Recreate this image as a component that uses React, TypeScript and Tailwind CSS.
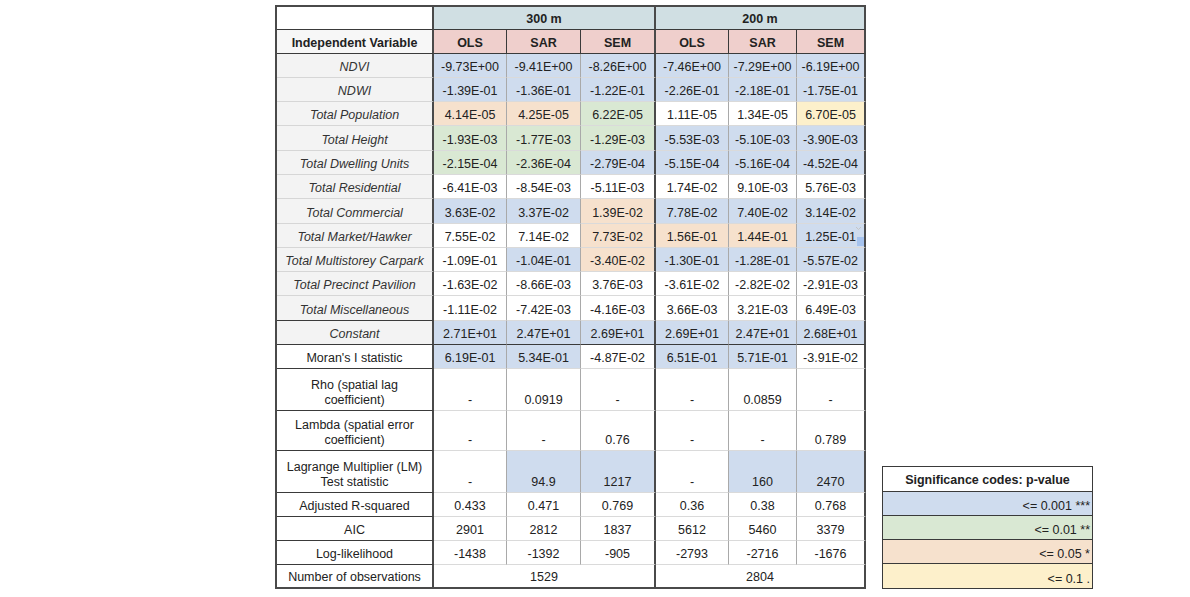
import type { ReactNode } from 'react';

type Fill = 'B' | 'G' | 'O' | 'Y' | 'W';

const fillClass: Record<Fill, string> = {
  B: 'bg-[#cfdcee]',
  G: 'bg-[#d9e8d3]',
  O: 'bg-[#f6e1cd]',
  Y: 'bg-[#fdf0cb]',
  W: 'bg-white',
};

interface CoefRow {
  label: string;
  vals: string[];
  fills: string;
}

const coefRows: CoefRow[] = [
  { label: 'NDVI', vals: ['-9.73E+00', '-9.41E+00', '-8.26E+00', '-7.46E+00', '-7.29E+00', '-6.19E+00'], fills: 'BBBBBB' },
  { label: 'NDWI', vals: ['-1.39E-01', '-1.36E-01', '-1.22E-01', '-2.26E-01', '-2.18E-01', '-1.75E-01'], fills: 'BBBBBB' },
  { label: 'Total Population', vals: ['4.14E-05', '4.25E-05', '6.22E-05', '1.11E-05', '1.34E-05', '6.70E-05'], fills: 'OOGWWY' },
  { label: 'Total Height', vals: ['-1.93E-03', '-1.77E-03', '-1.29E-03', '-5.53E-03', '-5.10E-03', '-3.90E-03'], fills: 'GGGBBB' },
  { label: 'Total Dwelling Units', vals: ['-2.15E-04', '-2.36E-04', '-2.79E-04', '-5.15E-04', '-5.16E-04', '-4.52E-04'], fills: 'GGBBBB' },
  { label: 'Total Residential', vals: ['-6.41E-03', '-8.54E-03', '-5.11E-03', '1.74E-02', '9.10E-03', '5.76E-03'], fills: 'WWWWWW' },
  { label: 'Total Commercial', vals: ['3.63E-02', '3.37E-02', '1.39E-02', '7.78E-02', '7.40E-02', '3.14E-02'], fills: 'BBOBBB' },
  { label: 'Total Market/Hawker', vals: ['7.55E-02', '7.14E-02', '7.73E-02', '1.56E-01', '1.44E-01', '1.25E-01'], fills: 'WWOOOB' },
  { label: 'Total Multistorey Carpark', vals: ['-1.09E-01', '-1.04E-01', '-3.40E-02', '-1.30E-01', '-1.28E-01', '-5.57E-02'], fills: 'WBOBBB' },
  { label: 'Total Precinct Pavilion', vals: ['-1.63E-02', '-8.66E-03', '3.76E-03', '-3.61E-02', '-2.82E-02', '-2.91E-03'], fills: 'WWWWWW' },
  { label: 'Total Miscellaneous', vals: ['-1.11E-02', '-7.42E-03', '-4.16E-03', '3.66E-03', '3.21E-03', '6.49E-03'], fills: 'WWWWWW' },
  { label: 'Constant', vals: ['2.71E+01', '2.47E+01', '2.69E+01', '2.69E+01', '2.47E+01', '2.68E+01'], fills: 'BBBBBB' },
];

interface StatRow {
  label: ReactNode;
  vals: string[];
  fills: string;
}

const statRows: StatRow[] = [
  { label: "Moran's I statistic", vals: ['6.19E-01', '5.34E-01', '-4.87E-02', '6.51E-01', '5.71E-01', '-3.91E-02'], fills: 'BBWBBW' },
  { label: <>Rho (spatial lag<br />coefficient)</>, vals: ['-', '0.0919', '-', '-', '0.0859', '-'], fills: 'WWWWWW' },
  { label: <>Lambda (spatial error<br />coefficient)</>, vals: ['-', '-', '0.76', '-', '-', '0.789'], fills: 'WWWWWW' },
  { label: <>Lagrange Multiplier (LM)<br />Test statistic</>, vals: ['-', '94.9', '1217', '-', '160', '2470'], fills: 'WBBWBB' },
  { label: 'Adjusted R-squared', vals: ['0.433', '0.471', '0.769', '0.36', '0.38', '0.768'], fills: 'WWWWWW' },
  { label: 'AIC', vals: ['2901', '2812', '1837', '5612', '5460', '3379'], fills: 'WWWWWW' },
  { label: 'Log-likelihood', vals: ['-1438', '-1392', '-905', '-2793', '-2716', '-1676'], fills: 'WWWWWW' },
];

const Cell = ({ children, className = '' }: { children?: ReactNode; className?: string }) => (
  <div className={`flex items-end justify-center pb-[2px] text-center leading-[15px] ${className}`}>
    {children}
  </div>
);

// right border of a data column: thick after each SEM
const rightEdge = (i: number) =>
  i === 2 || i === 5 ? 'border-r-2 border-r-[#4a4a4a]' : 'border-r border-r-[#a9a9a9]';

const FillHandle = () => (
  <>
    <svg className="absolute right-[2px] top-[2px]" width="7" height="5" viewBox="0 0 7 5">
      <path d="M1 1 L3.5 3.5 L6 1" fill="none" stroke="#c4c4c4" strokeWidth="1" />
    </svg>
    <div className="absolute right-0 bottom-[1px] w-[7px] h-[9px] bg-[#a6c3ee]" />
  </>
);

const legend: { text: string; fill: Fill }[] = [
  { text: '<= 0.001 ***', fill: 'B' },
  { text: '<= 0.01 **', fill: 'G' },
  { text: '<= 0.05 *', fill: 'O' },
  { text: '<= 0.1 .', fill: 'Y' },
];

export default function App() {
  return (
    <div className="min-h-[597px] w-[1190px] bg-white font-['Liberation_Sans',Arial,sans-serif] text-[12.5px] text-[#222]">
      <div className="flex items-end gap-[16px] pl-[275px] pt-[5px]">
        {/* Regression table */}
        <div className="grid w-[591px] grid-cols-[157px_73px_74px_75px_73px_68px_69px] grid-rows-[23px_23.5px_repeat(13,24.3px)_41.4px_40px_42.6px_23.4px_24.3px_24px_24.3px] border-l-2 border-t-2 border-[#4a4a4a]">
          {/* header: distance bands */}
          <Cell className="bg-white border-r-2 border-r-[#4a4a4a] border-b border-b-[#3a3a3a]" />
          <Cell className="col-span-3 bg-[#d0dfe3] font-bold border-r-2 border-r-[#4a4a4a] border-b border-b-[#3a3a3a]">300 m</Cell>
          <Cell className="col-span-3 bg-[#d0dfe3] font-bold border-r-2 border-r-[#4a4a4a] border-b border-b-[#3a3a3a]">200 m</Cell>

          {/* header: models */}
          <Cell className="bg-[#f7f7f7] font-bold border-r-2 border-r-[#4a4a4a] border-b border-b-[#3a3a3a]">Independent Variable</Cell>
          {['OLS', 'SAR', 'SEM', 'OLS', 'SAR', 'SEM'].map((m, i) => (
            <Cell
              key={`h${i}`}
              className={`bg-[#efcfcc] font-bold border-b border-b-[#3a3a3a] ${
                i === 2 || i === 5 ? 'border-r-2 border-r-[#4a4a4a]' : 'border-r border-r-[#3a3a3a]'
              }`}
            >
              {m}
            </Cell>
          ))}

          {/* coefficients */}
          {coefRows.map((row, r) => {
            const darkLabelBottom = r >= coefRows.length - 2;
            const darkValueBottom = r === coefRows.length - 1;
            return [
              <Cell
                key={`l${r}`}
                className={`bg-[#f3f3f3] italic text-[#333] border-r-2 border-r-[#4a4a4a] border-b ${
                  darkLabelBottom ? 'border-b-[#3a3a3a]' : 'border-b-[#d6d6d6]'
                }`}
              >
                {row.label}
              </Cell>,
              ...row.vals.map((v, i) => (
                <Cell
                  key={`c${r}-${i}`}
                  className={`${fillClass[row.fills[i] as Fill]} ${rightEdge(i)} border-b ${
                    darkValueBottom ? 'border-b-[#3a3a3a]' : 'border-b-[#dadada]'
                  } ${r === 7 && i === 5 ? 'relative' : ''}`}
                >
                  {v}
                  {r === 7 && i === 5 && <FillHandle />}
                </Cell>
              )),
            ];
          })}

          {/* model statistics */}
          {statRows.map((row, r) => [
            <Cell key={`sl${r}`} className="bg-white border-r-2 border-r-[#4a4a4a] border-b border-b-[#3a3a3a]">
              <span>{row.label}</span>
            </Cell>,
            ...row.vals.map((v, i) => (
              <Cell
                key={`s${r}-${i}`}
                className={`${fillClass[row.fills[i] as Fill]} ${rightEdge(i)} border-b border-b-[#dadada]`}
              >
                {v}
              </Cell>
            )),
          ])}

          {/* observations */}
          <Cell className="bg-white border-r-2 border-r-[#4a4a4a] border-b-2 border-b-[#4a4a4a]">Number of observations</Cell>
          <Cell className="col-span-3 bg-white border-r-2 border-r-[#4a4a4a] border-b-2 border-b-[#4a4a4a]">1529</Cell>
          <Cell className="col-span-3 bg-white border-r-2 border-r-[#4a4a4a] border-b-2 border-b-[#4a4a4a]">2804</Cell>
        </div>

        {/* Significance legend */}
        <div className="grid w-[211px] grid-rows-[25px_24.3px_24.3px_24px_24px] border border-[#3a3a3a]">
          <div className="flex items-end justify-center border-b border-[#3a3a3a] bg-white pb-[3px] font-bold leading-[15px]">
            Significance codes: p-value
          </div>
          {legend.map((l, i) => (
            <div
              key={l.text}
              className={`flex items-end justify-end pr-[2px] pb-[1px] leading-[15px] ${fillClass[l.fill]} ${
                i < legend.length - 1 ? 'border-b border-[#3a3a3a]' : ''
              }`}
            >
              {l.text}
            </div>
          ))}
        </div>
      </div>
    </div>
  );
}
